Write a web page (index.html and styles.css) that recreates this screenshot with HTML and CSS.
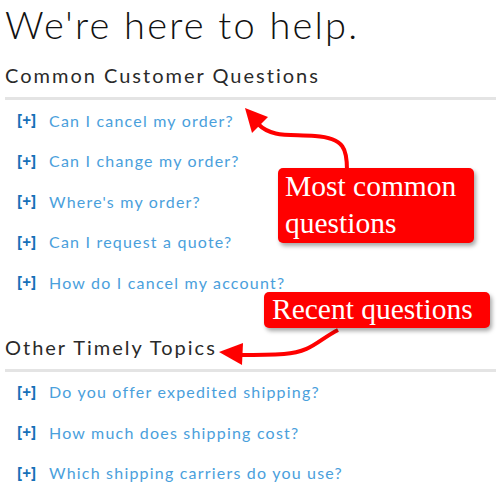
FILE: index.html
```html
<!DOCTYPE html>
<html lang="en">
  <head>
    <meta charset="UTF-8">
    <meta name="viewport" content="width=device-width, initial-scale=1.0">
    <title>Help</title>
    <link rel="stylesheet" href="styles.css">
  </head>
  <body>
    <div class="page">
      <h1>We're here to help.</h1>

      <div class="section">
        <h2>Common Customer Questions</h2>
        <ul class="faq">
          <li><span class="toggle">[+]</span><a href="#">Can I cancel my order?</a></li>
          <li><span class="toggle">[+]</span><a href="#">Can I change my order?</a></li>
          <li><span class="toggle">[+]</span><a href="#">Where's my order?</a></li>
          <li><span class="toggle">[+]</span><a href="#">Can I request a quote?</a></li>
          <li><span class="toggle">[+]</span><a href="#">How do I cancel my account?</a></li>
        </ul>
      </div>

      <div class="section">
        <h2>Other Timely Topics</h2>
        <ul class="faq">
          <li><span class="toggle">[+]</span><a href="#">Do you offer expedited shipping?</a></li>
          <li><span class="toggle">[+]</span><a href="#">How much does shipping cost?</a></li>
          <li><span class="toggle">[+]</span><a href="#">Which shipping carriers do you use?</a></li>
        </ul>
      </div>

      <!-- annotations drawn over the page -->
      <svg class="arrows" width="500" height="487" viewBox="0 0 500 487">
        <path d="M347 170 C 347 150, 345 138, 315 136 C 290 134, 272 138, 258 124" fill="none" stroke="#f00" stroke-width="4"/>
        <polygon points="245,108 268,117 252,133" fill="#f00"/>
        <path d="M338 330 C 318 340, 312 352, 284 354 C 268 355, 254 355, 240 355" fill="none" stroke="#f00" stroke-width="4"/>
        <polygon points="219,352 243,343 242,365" fill="#f00"/>
      </svg>
      <div class="callout callout-common">Most common questions</div>
      <div class="callout callout-recent">Recent questions</div>
    </div>
  </body>
</html>
```

FILE: styles.css
```css
body {
  margin: 0;
  background-color: #fff;
  font-family: Lato, "Open Sans", sans-serif;
}

.page {
  position: relative;
  width: 500px;
  height: 487px;
  overflow: hidden;
  padding: 0 4px 0 5px;
  box-sizing: border-box;
}

h1 {
  margin: 0;
  padding-top: 2px;
  font-size: 38px;
  font-weight: 300;
  color: #111;
  line-height: 44px;
  letter-spacing: 2.2px;
}

.section {
  margin-top: 16px;
}

.section + .section {
  margin-top: 31px;
}

h2 {
  margin: 0;
  font-size: 20px;
  font-weight: 400;
  color: #2a2a2a;
  line-height: 26px;
  letter-spacing: 2px;
  padding-bottom: 9px;
  border-bottom: 3px solid #e4e4e4;
}

.faq {
  list-style: none;
  margin: 0;
  padding: 0 0 0 12px;
}

.faq li {
  display: flex;
  align-items: center;
  height: 40.5px;
}

.toggle {
  width: 32px;
  font-size: 15.5px;
  font-weight: 700;
  color: #1670b8;
  font-family: "Open Sans", sans-serif;
}

.faq a {
  font-size: 16px;
  color: #4aa0dc;
  text-decoration: none;
  letter-spacing: 1.2px;
}

.arrows {
  position: absolute;
  left: 0;
  top: 0;
}

.callout {
  position: absolute;
  background-color: #f00;
  color: #fff;
  font-family: "Liberation Serif", serif;
  font-size: 29.5px;
  border-radius: 5px;
  box-shadow: 2px 3px 4px rgba(0, 0, 0, 0.35);
  box-sizing: border-box;
}

.callout-common {
  left: 278px;
  top: 168px;
  width: 196px;
  height: 75px;
  padding: 0 0 0 7px;
  line-height: 37px;
}

.callout-recent {
  left: 264px;
  top: 292px;
  width: 226px;
  height: 36px;
  padding: 0 0 0 8px;
  line-height: 34px;
}
```
